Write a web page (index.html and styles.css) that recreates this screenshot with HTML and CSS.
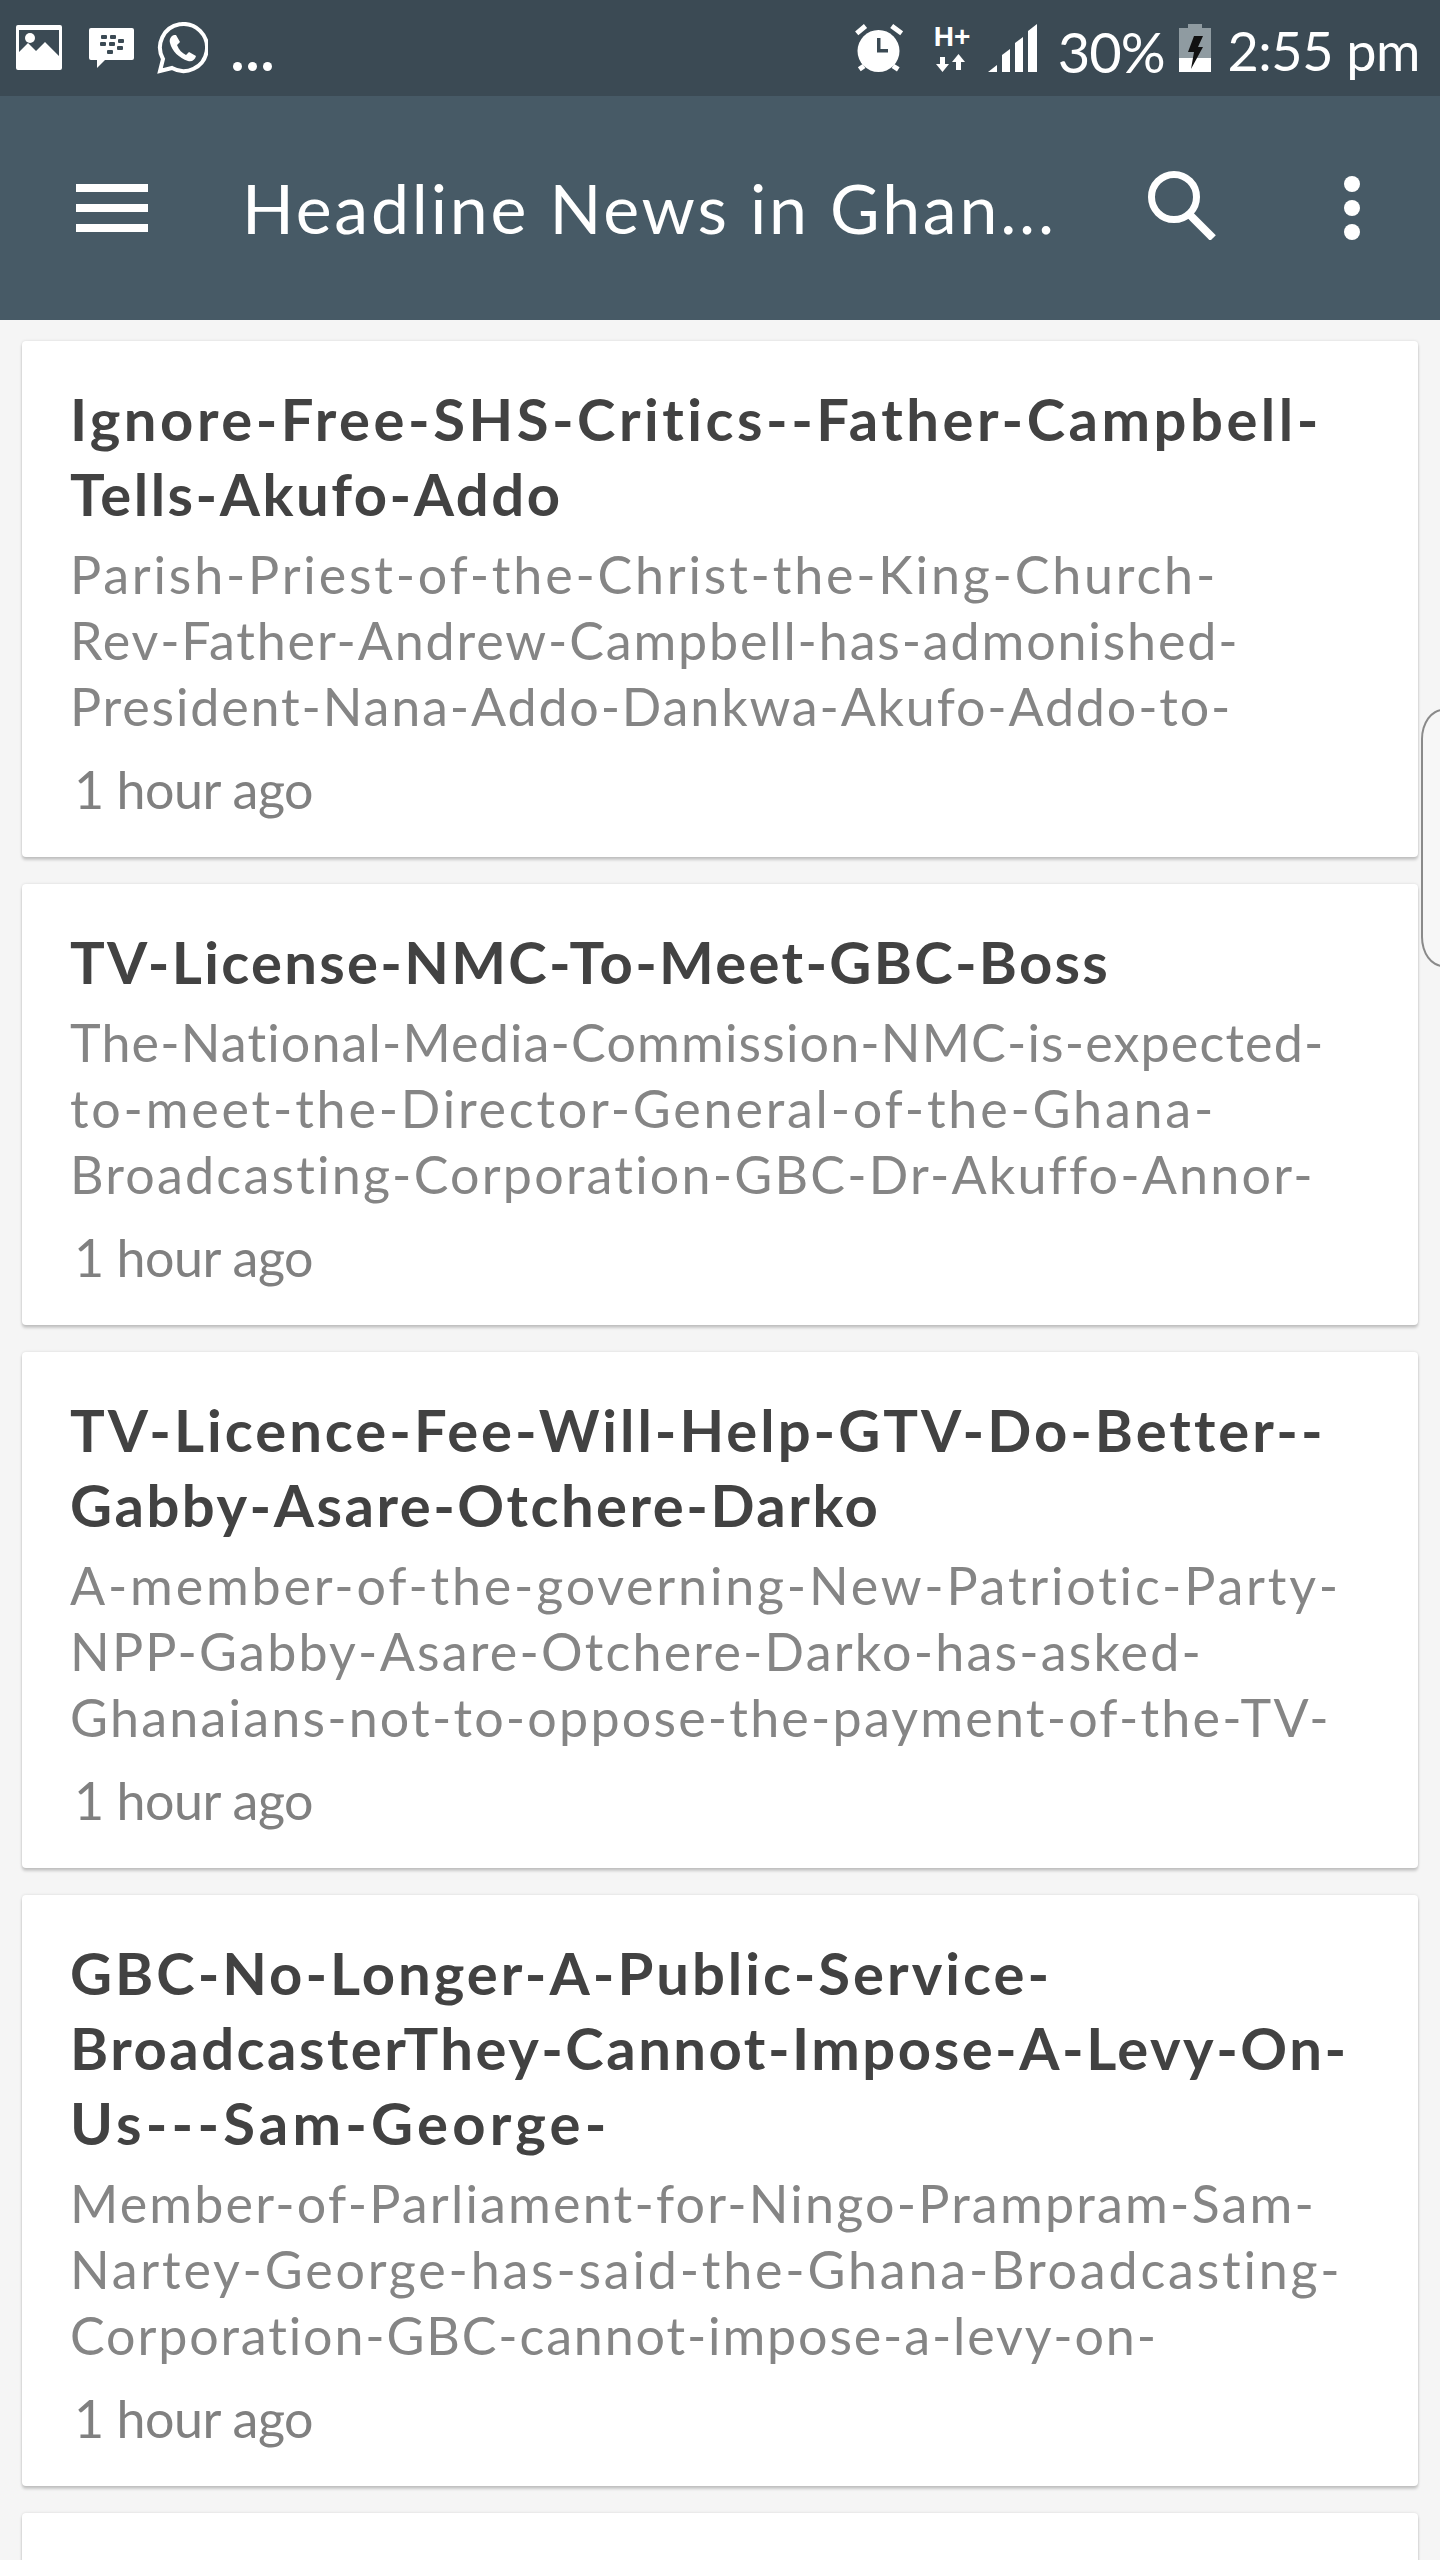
FILE: index.html
```html
<!DOCTYPE html>
<html lang="en">
<head>
<meta charset="utf-8">
<title>Headline News in Ghana</title>
<link rel="stylesheet" href="styles.css">
</head>
<body>
<div class="phone">
  <header class="status">
    <div class="status-left">
      <svg class="ic-pic" viewBox="0 0 46 45"><path fill="#fff" fill-rule="evenodd" d="M2 0h42a2 2 0 0 1 2 2v41a2 2 0 0 1-2 2H2a2 2 0 0 1-2-2V2a2 2 0 0 1 2-2zM3 5v22l9-9 8 8 9-9 14 14V5z"/><circle cx="14" cy="13" r="5" fill="#fff"/></svg>
      <svg class="ic-bbm" viewBox="0 0 45 40"><path fill="#fff" d="M2 0h41a2 2 0 0 1 2 2v28a2 2 0 0 1-2 2H16l-8 8v-8H2a2 2 0 0 1-2-2V2a2 2 0 0 1 2-2z"/><g fill="#3b4a54"><rect x="12" y="7" width="6" height="4" rx="1"/><rect x="21" y="7" width="6" height="4" rx="1"/><rect x="11" y="14" width="6" height="4" rx="1"/><rect x="20" y="14" width="6" height="4" rx="1"/><rect x="29" y="11" width="6" height="4" rx="1"/><rect x="28" y="18" width="6" height="4" rx="1"/><rect x="18" y="22" width="6" height="4" rx="1"/></g></svg>
      <svg class="ic-wa" viewBox="0 0 52 52"><path fill="none" stroke="#fff" stroke-width="4" d="M4 49l3-12A23.500 23.500 0 1 1 16 46z"/><path fill="#fff" d="M18 13c-3 1-5 4-4 8 2 8 9 15 18 18 4 1 7-1 8-5l-7-4-3 3c-4-2-7-5-9-10l3-3-4-7z"/></svg>
      <span class="ic-more"><i></i><i></i><i></i></span>
    </div>
    <div class="status-right">
      <svg class="ic-alarm" viewBox="0 0 48 48"><circle cx="23.500" cy="27" r="21" fill="#fff"/><path fill="#3b4a54" d="M22 14h3.500v11H33v3.500H22z"/><path stroke="#fff" stroke-width="5" d="M1.700 9.300L10.500 2M36.700 2l10 7.300M4.300 45.300L9 42M43.300 45.300L38 42"/></svg>
      <div class="net">
        <span class="net-h">H+</span>
        <svg class="ic-arrows" viewBox="0 0 34 18"><path fill="#fff" d="M6 3h5v7h4l-6.500 8L2 10h4zM24.500 0L31 8h-4v8h-5V8h-4z"/></svg>
      </div>
      <svg class="ic-signal" viewBox="0 0 49 48"><g fill="#fff"><path d="M0 48l9-7v7z"/><path d="M14 31l8-6v23h-8z"/><path d="M27 19l8-6v35h-8z"/><path d="M40 7l9-7v48h-9z"/></g></svg>
      <span class="pct">30%</span>
      <svg class="ic-batt" viewBox="0 0 32 48"><path fill="#8f9ba1" d="M9 0h14v4h9v30H0V4h9z"/><path fill="#fff" d="M0 34h32v14H0z"/><path fill="#111" d="M15 12h9l-5 11h5L12 45l3-17H9z"/></svg>
      <span class="clock">2:55 pm</span>
    </div>
  </header>

  <div class="appbar">
    <div class="menu"><i></i><i></i><i></i></div>
    <h1 class="app-title">Headline News in Ghan...</h1>
    <svg class="ic-search" viewBox="0 0 69 69"><circle cx="26" cy="26" r="22.500" fill="none" stroke="#fff" stroke-width="7"/><path stroke="#fff" stroke-width="8" d="M41 43l24 24"/></svg>
    <div class="kebab"><i></i><i></i><i></i></div>
  </div>

  <main class="feed">
    <article class="card">
      <h2 class="headline"><span class="wider">Ignore-Free-SHS-Critics--Father-Campbell-</span><span>Tells-Akufo-Addo</span></h2>
      <p class="summary"><span class="wide">Parish-Priest-of-the-Christ-the-King-Church-</span><span class="snug">Rev-Father-Andrew-Campbell-has-admonished-</span><span class="snug">President-Nana-Addo-Dankwa-Akufo-Addo-to-</span></p>
      <p class="age">1 hour ago</p>
    </article>
    <article class="card">
      <h2 class="headline"><span class="snug">TV-License-NMC-To-Meet-GBC-Boss</span></h2>
      <p class="summary"><span class="tight">The-National-Media-Commission-NMC-is-expected-</span><span class="wide">to-meet-the-Director-General-of-the-Ghana-</span><span>Broadcasting-Corporation-GBC-Dr-Akuffo-Annor-</span></p>
      <p class="age">1 hour ago</p>
    </article>
    <article class="card">
      <h2 class="headline"><span class="wide">TV-Licence-Fee-Will-Help-GTV-Do-Better--</span><span>Gabby-Asare-Otchere-Darko</span></h2>
      <p class="summary"><span class="wide">A-member-of-the-governing-New-Patriotic-Party-</span><span>NPP-Gabby-Asare-Otchere-Darko-has-asked-</span><span>Ghanaians-not-to-oppose-the-payment-of-the-TV-</span></p>
      <p class="age">1 hour ago</p>
    </article>
    <article class="card">
      <h2 class="headline"><span class="wide">GBC-No-Longer-A-Public-Service-</span><span>BroadcasterThey-Cannot-Impose-A-Levy-On-</span><span class="widest">Us---Sam-George-</span></h2>
      <p class="summary"><span>Member-of-Parliament-for-Ningo-Prampram-Sam-</span><span class="wide">Nartey-George-has-said-the-Ghana-Broadcasting-</span><span class="snug">Corporation-GBC-cannot-impose-a-levy-on-</span></p>
      <p class="age">1 hour ago</p>
    </article>
    <article class="card"></article>
  </main>

  <div class="edge-handle"></div>
</div>
</body>
</html>
```

FILE: styles.css
```css
* { box-sizing: border-box; }
html, body { margin: 0; padding: 0; }
body { background: #f5f5f5; font-family: "Lato", "Noto Sans", sans-serif; }
i { display: block; }

.phone { position: relative; width: 1440px; height: 2560px; overflow: hidden; background: #f5f5f5; }

.status { height: 96px; background: #3b4a54; display: flex; justify-content: space-between; color: #fff; }
.status-left { display: flex; align-items: flex-start; padding-left: 16px; }
.ic-pic { width: 46px; height: 45px; margin-top: 25px; }
.ic-bbm { width: 45px; height: 40px; margin: 28px 0 0 27px; }
.ic-wa { width: 52px; height: 52px; margin: 22px 0 0 22px; }
.ic-more { display: flex; gap: 6px; margin: 62px 0 0 25px; }
.ic-more i { width: 9px; height: 9px; border-radius: 50%; background: #fff; }

.status-right { display: flex; align-items: flex-start; padding-right: 20px; }
.ic-alarm { width: 48px; height: 48px; margin-top: 24px; }
.net { width: 34px; margin: 24px 0 0 31px; display: flex; flex-direction: column; }
.net-h { font: 700 28px/26px "Liberation Sans", sans-serif; white-space: nowrap; letter-spacing: 0; }
.ic-arrows { width: 34px; height: 18px; margin-top: 4px; }
.ic-signal { width: 49px; height: 48px; margin: 24px 0 0 20px; }
.pct { font-size: 56px; line-height: 60px; margin: 22px 0 0 21px; letter-spacing: -1px; }
.ic-batt { width: 32px; height: 48px; margin: 24px 0 0 14px; }
.clock { font-size: 54px; line-height: 60px; margin: 21px 0 0 17px; letter-spacing: -0.5px; white-space: nowrap; }

.appbar { height: 224px; background: #475a66; display: flex; align-items: center; color: #fff; }
.menu { width: 72px; margin-left: 76px; display: flex; flex-direction: column; gap: 12px; }
.menu i { height: 8px; background: #fff; }
.app-title { margin: 0 0 0 94px; width: 814px; font-size: 68px; font-weight: 400; line-height: 80px; white-space: nowrap; letter-spacing: 2.8px; }
.ic-search { width: 69px; height: 69px; margin: -6px 0 0 92px; }
.kebab { margin-left: 127px; display: flex; flex-direction: column; gap: 8px; }
.kebab i { width: 16px; height: 16px; border-radius: 50%; background: #fff; }

.feed { padding: 21px 22px 0; display: flex; flex-direction: column; gap: 27px; }
.card { background: #fff; border-radius: 4px; padding: 40px 40px 38px 48px; box-shadow: 0 0 3px rgba(0,0,0,.12), 0 3px 3px rgba(0,0,0,.18); flex: none; }
.card:empty { height: 120px; }
.headline, .summary, .age { margin: 0; white-space: nowrap; }
.headline span, .summary span { display: block; }
.headline { font-size: 58px; font-weight: 700; line-height: 75px; color: #424242; letter-spacing: 2.500px; }
.headline .snug { letter-spacing: 2.300px; }
.headline .wide { letter-spacing: 3px; }
.headline .wider { letter-spacing: 3.500px; }
.headline .widest { letter-spacing: 4.200px; }
.summary { margin-top: 10px; font-size: 52px; line-height: 66px; color: #858585; letter-spacing: 2.200px; }
.summary .tight { letter-spacing: 1.150px; }
.summary .snug { letter-spacing: 1.850px; }
.summary .wide { letter-spacing: 2.800px; }
.age { margin: 20px 0 0 4px; font-size: 52px; line-height: 60px; color: #808080; letter-spacing: -0.5px; }

.edge-handle { position: absolute; left: 1421px; top: 709px; width: 40px; height: 258px; border: 2px solid #8a8a8a; border-radius: 22px 0 0 22px / 30px 0 0 30px; background: #f7f7f7; }
```
